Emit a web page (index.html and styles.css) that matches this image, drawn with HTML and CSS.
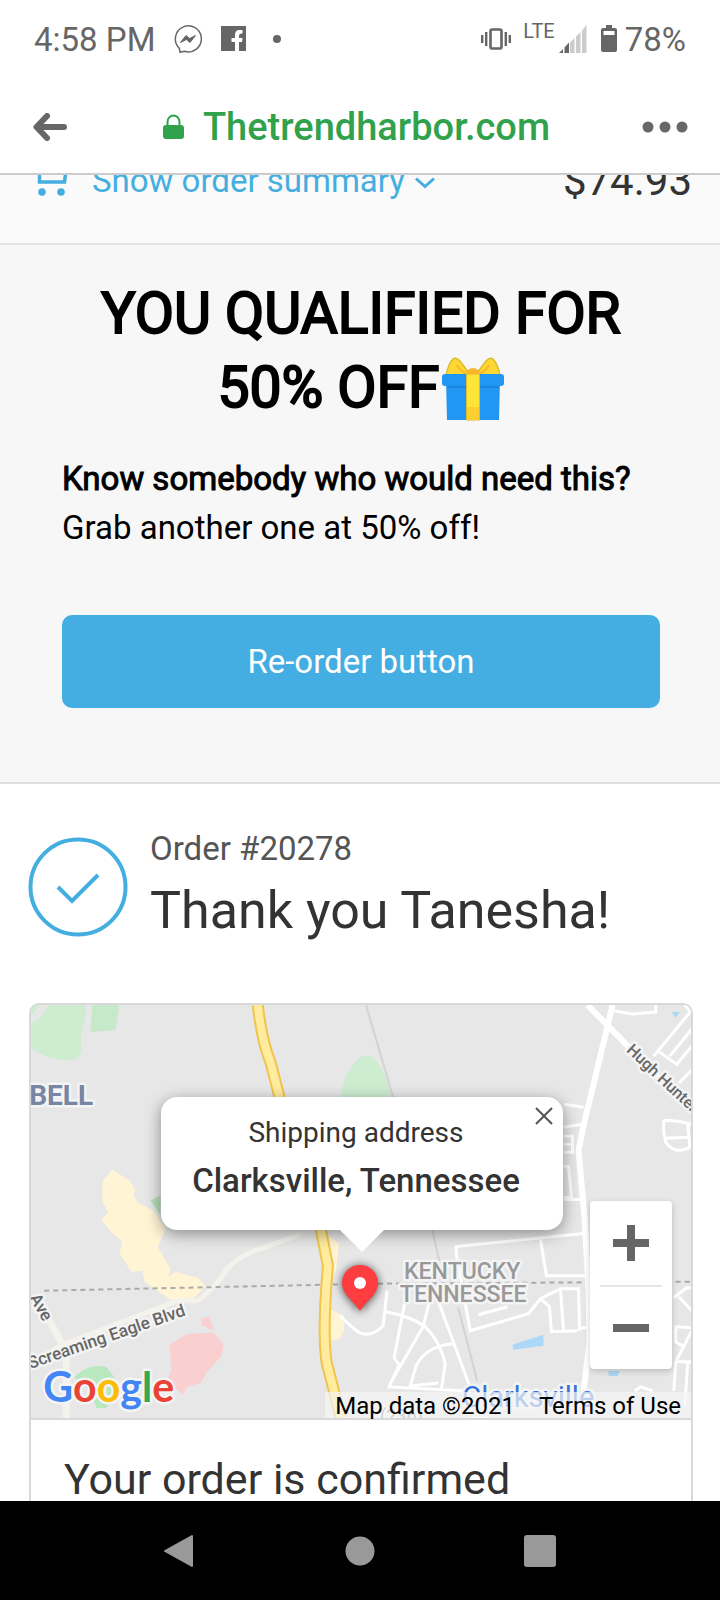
FILE: index.html
```html
<!DOCTYPE html>
<html lang="en">
<head>
<meta charset="utf-8">
<meta name="viewport" content="width=device-width, initial-scale=1">
<title>Thetrendharbor.com</title>
<link rel="stylesheet" href="styles.css">
</head>
<body>
<div class="status">
  <div class="status-group">
    <span>4:58 PM</span>
    <svg class="messenger" width="28" height="28" viewBox="0 0 28 28" fill="none" stroke="#666" stroke-width="1.5"><path d="M5.300 23.200A13 13 0 1 1 10.500 26.300L6 27.200Z" stroke-linejoin="round"/><path d="M6.500 17.500L12 10.500L15.500 13.500L21.500 10.500L16 17.500L12.500 14.500Z" fill="#666" stroke-width="1"/></svg>
    <svg class="facebook" width="26" height="26" viewBox="0 0 26 26"><path fill="#666" d="M0 0H25V25H18V16H21L21.500 12H18V10Q18 7.500 20.500 7.500H21.500V4H18.500Q14 4 14 9V12H10.500V16H14V25H0Z"/></svg>
    <svg class="dot" width="8" height="8" viewBox="0 0 8 8"><circle cx="4" cy="4" r="4" fill="#666"/></svg>
  </div>
  <div class="status-group status-right">
    <svg width="30" height="22" viewBox="0 0 30 22" fill="none" stroke="#666" stroke-width="2"><rect x="9.500" y="1.500" width="11" height="19" rx="1.500" stroke-width="2.600"/><path d="M1.200 7V15M5.200 4V18M24.800 4V18M28.800 7V15" stroke-width="2.400"/></svg>
    <span class="lte">LTE</span>
    <svg class="signal" width="28" height="28" viewBox="0 0 28 28"><path fill="#ccc" d="M11 17.500L15.500 13V28H11ZM17 11.500L21.500 7V28H17ZM23 5.500L27.500 0V28H23Z"/><path fill="#666" d="M0 28L4 24V28ZM5.500 22.500L10 17.500V28H5.500Z"/></svg>
    <svg class="battery" width="16" height="28" viewBox="0 0 16 28"><path fill="#666" fill-rule="evenodd" d="M5 0H11V3H14Q16 3 16 5V25Q16 27 14 27H2Q0 27 0 25V5Q0 3 2 3H5ZM2.500 6V10H13.500V6Z"/></svg>
    <span>78%</span>
  </div>
</div>
<header class="browser">
  <button class="icon-button" aria-label="Back"><svg width="34" height="28" viewBox="0 0 34 28" fill="none" stroke="#666769" stroke-width="6" stroke-linecap="round" stroke-linejoin="round"><path d="M31 14H4M14 3L3.500 14L14 25"/></svg></button>
  <div class="site">
    <svg width="22" height="26" viewBox="0 0 22 26"><rect x="0" y="11" width="21" height="14" rx="3" fill="#31a24c"/><path d="M4.500 13V8A6 6.500 0 0 1 16.500 8V13" fill="none" stroke="#31a24c" stroke-width="2"/></svg>
    <span>Thetrendharbor.com</span>
  </div>
  <button class="icon-button" aria-label="More options"><svg width="46" height="12" viewBox="0 0 46 12" fill="#666769"><circle cx="6" cy="6" r="5.500"/><circle cx="23" cy="6" r="5.500"/><circle cx="40" cy="6" r="5.500"/></svg></button>
</header>
<main class="page">
  <button class="summary">
    <svg class="cart" width="38" height="32" viewBox="0 0 38 32" fill="none" stroke="#44aee0" stroke-width="3.500"><path d="M0 2H9.500V18H34.500L36 6H9.500"/><g fill="#44aee0" stroke="none"><circle cx="12" cy="28" r="3.800"/><circle cx="31" cy="28" r="3.800"/></g></svg>
    <span>Show order summary</span>
    <svg class="chevron" width="20" height="12" viewBox="0 0 20 12" fill="none" stroke="#44aee0" stroke-width="3"><path d="M1 1.500L10 9.500L19 1.500"/></svg>
    <span class="total">$74.93</span>
  </button>
  <section class="offer">
    <h1>YOU QUALIFIED FOR<br>50% OFF<svg class="gift" width="64" height="64" viewBox="0 0 64 64" role="img" aria-label="Gift"><g fill="#fdd835" stroke="#d9bd25" stroke-width="1.500"><path d="M5 19Q7 7 12 2Q15 0 19 4L28 16L24 19Z"/><path d="M59 19Q57 7 52 2Q49 0 45 4L36 16L40 19Z"/></g><path d="M16 8Q18 13 26 17M48 8Q46 13 38 17" stroke="#fbb52c" stroke-width="2" fill="none"/><path fill="#2196f3" d="M5 22H59L58 63H6Z"/><path d="M6 30H58" stroke="#1b86dc" stroke-width="2"/><rect x="1" y="17" width="62" height="12" rx="3" fill="#2196f3"/><path fill="#ffe535" stroke="#d8bc2b" d="M25.500 17H38.500V63H25.500Z"/><path fill="#fdd030" d="M26 50H38V63H26Z"/><path fill="#fbb52c" d="M26 17Q26 11 32 11Q38 11 38 17Z"/></svg></h1>
    <p><strong>Know somebody who would need this?</strong><br>Grab another one at 50% off!</p>
    <button class="reorder">Re-order button</button>
  </section>
  <section class="thanks">
    <svg width="100" height="100" viewBox="0 0 100 100" fill="none" stroke="#44aee0" stroke-width="4"><circle cx="50" cy="50" r="47.500"/><path d="M30 50L44 64L70 38"/></svg>
    <div>
      <p class="order-number">Order #20278</p>
      <h2>Thank you Tanesha!</h2>
    </div>
  </section>
  <section class="card">
    <div class="map">
      <svg class="map-art" viewBox="31 1005 660 412" preserveAspectRatio="xMidYMid slice" role="img" aria-label="Map of Clarksville, Tennessee">
        <rect x="31" y="1005" width="660" height="412" fill="#e7e7e7"/>
        <g fill="#cdecd0">
          <path d="M49 1005H87L86 1018L82 1032V1050Q80 1060 72 1060Q46 1060 31 1047V1024Q44 1018 49 1005Z"/>
          <path d="M31 1005H41L31 1017Z"/>
          <path fill="#c6e9c9" d="M93 1005H120L116 1030L91 1032Z"/>
          <path d="M341 1098Q342 1078 353 1065Q361 1052 373 1057Q388 1074 391 1098Z"/>
          <path fill="#b9e8be" d="M75 1376Q90 1362 107 1366L120 1383L107 1407H97L92 1391Z"/>
          <path fill="#b5dfbc" d="M151 1200L161 1195V1215Z"/>
        </g>
        <g fill="#fff4d4">
          <path d="M103 1181L113 1169L130 1180L136 1189L134 1194L138 1202L154 1210L166 1228L161 1241L158 1246L171 1268L169 1276L176 1271L198 1277L206 1285L195 1297L171 1299L145 1281L143 1270L132 1271L120 1253L123 1241L112 1232L102 1219L109 1212L103 1201Z"/>
          <path d="M325 1233L339 1243L336 1270L329 1285ZM327 1307L344 1315V1330L339 1339H329Z"/>
        </g>
        <path fill="#facfcf" d="M201 1318L209 1316L215 1330L203 1325ZM170 1344L188 1333L214 1332L224 1344L222 1355L208 1370L201 1382L187 1386L183 1394L168 1378L172 1369Z"/>
        <g fill="#acd8f7"><path d="M671 1012H679L675 1018ZM512 1344L543 1334V1345L513 1349ZM608 1370H619L617 1375H608Z"/></g>
        <g fill="none" stroke="#f3f2ed" stroke-width="7">
          <path d="M43 1307L67 1350V1417M31 1365L68 1342"/>
          <path d="M68 1342L178 1300H198Q216 1287 226 1270Q240 1254 261 1248L300 1234" stroke-width="5"/>
        </g>
        <g fill="none" stroke="#d3d3d3" stroke-width="2"><path d="M366 1005L393 1097M432 1229L439 1260M458 1307L477 1380"/></g>
        <path d="M45 1290L375 1283L691 1281" fill="none" stroke="#aaa" stroke-width="2" stroke-dasharray="5 4"/>
        <g fill="none" stroke="#f1c44e" stroke-width="12"><path d="M258 1005Q262 1041 271 1063L280 1098"/><path d="M321 1229L328 1265Q322 1335 327 1363L341 1417"/></g>
        <g fill="none" stroke="#ffec9f" stroke-width="8"><path d="M258 1005Q262 1041 271 1063L280 1098"/><path d="M321 1229L328 1265Q322 1335 327 1363L341 1417"/></g>
        <g fill="none" stroke="#fff">
          <path stroke-width="6" d="M587 1005L691 1111M612 1005L600 1055L583 1125L578 1150L584 1217L588 1290L589 1340L583 1390"/>
          <path stroke-width="3" d="M614 1011L632 1014L655 1012V1005M691 1010L653 1056M691 1029L669 1056M656 1050L676 1064L691 1046M678 1083L691 1070M684 1005L691 1013"/>
          <path stroke-width="3" d="M663 1120L678 1121L691 1124M663 1120Q662 1131 665 1142Q675 1155 689 1147L687 1124M664 1138L687 1137M564 1104L583 1107M563 1127L582 1124M563 1136H572V1152H563M563 1144H572M563 1166H568L571 1197H563M563 1199H580"/>
          <path stroke-width="3" d="M583 1233L456 1246V1253L470 1330L528 1313L540 1298L560 1288H578L579 1330M540 1239L546 1275H588M560 1288L563 1330M540 1298L549 1306L551 1331L577 1330M507 1306L478 1314M579 1327H588"/>
          <path stroke-width="3" d="M340 1315Q350 1325 358 1331Q370 1338 383 1325L387 1290M386 1311Q412 1316 425 1326Q440 1340 445 1363L441 1390M405 1300L394 1357L399 1364L389 1386L467 1390M438 1300L470 1387M429 1302L423 1326L390 1383M453 1343Q426 1345 416 1365L410 1385L438 1382"/>
          <path stroke-width="3" d="M673 1297L686 1287H691M678 1296L691 1310M691 1327L675 1326V1341L682 1345M691 1330L675 1361L673 1390M691 1361H675M687 1361L684 1405M634 1390L640 1386L652 1390"/>
        </g>
        <g class="map-label">
          <text x="30" y="1105" font-size="28" font-weight="700" fill="#7886a3">BELL</text>
          <text x="462" y="1278" font-size="23" font-weight="500" fill="#999" text-anchor="middle">KENTUCKY</text>
          <text x="463" y="1301" font-size="23" font-weight="500" fill="#999" text-anchor="middle">TENNESSEE</text>
          <text transform="translate(31 1368) rotate(-19)" font-size="17" font-weight="500" fill="#666">Screaming Eagle Blvd</text>
          <text transform="translate(30 1297) rotate(60)" font-size="17" font-weight="500" fill="#666">Ave</text>
          <text transform="translate(625 1051) rotate(43)" font-size="16" font-weight="500" fill="#666">Hugh Hunter</text>
          <text x="462" y="1406" font-size="29" fill="#3472dc">Clarksville</text>
          <text x="472" y="1434" font-size="24" fill="#3472dc">Tennessee</text>
          <text x="380" y="1421" font-size="18" fill="#777">(236)</text>
          <text class="google" x="44" y="1401" font-size="41" font-weight="700"><tspan fill="#4285f4">G</tspan><tspan fill="#ea4335">o</tspan><tspan fill="#fbbc05">o</tspan><tspan fill="#4285f4">g</tspan><tspan fill="#34a853">l</tspan><tspan fill="#ea4335">e</tspan></text>
        </g>
      </svg>
      <svg class="pin" width="38" height="48" viewBox="0 0 38 48"><path d="M19 47Q14 40 9 35Q1 27 1 19A18 18 0 0 1 37 19Q37 27 29 35Q24 40 19 47Z" fill="#fd3d40"/><circle cx="19" cy="19" r="6" fill="#fff"/></svg>
      <div class="bubble">
        <p>Shipping address</p>
        <p class="place">Clarksville, Tennessee</p>
        <button class="close" aria-label="Close"><svg width="18" height="18" viewBox="0 0 18 18" stroke="#555" stroke-width="2"><path d="M1 1L17 17M17 1L1 17"/></svg></button>
      </div>
      <div class="zoom">
        <button aria-label="Zoom in"><svg width="36" height="36" viewBox="0 0 36 36"><path fill="#666" d="M14 0H22V14H36V22H22V36H14V22H0V14H14Z"/></svg></button>
        <button aria-label="Zoom out"><svg width="36" height="36" viewBox="0 0 36 36"><path fill="#666" d="M0 14H36V22H0Z"/></svg></button>
      </div>
      <div class="attribution"><span>Map data ©2021</span><a href="#terms">Terms of Use</a></div>
    </div>
    <h3>Your order is confirmed</h3>
  </section>
</main>
<nav class="system-nav">
  <button aria-label="Back"><svg width="34" height="34" viewBox="0 0 34 34"><path d="M29 2V32L2 17Z" fill="#999" stroke="#999" stroke-width="2" stroke-linejoin="round"/></svg></button>
  <button aria-label="Home"><svg width="34" height="34" viewBox="0 0 34 34"><circle cx="17" cy="17" r="14.500" fill="#999"/></svg></button>
  <button aria-label="Recent apps"><svg width="34" height="34" viewBox="0 0 34 34"><rect x="1" y="1" width="32" height="32" rx="3" fill="#999"/></svg></button>
</nav>
</body>
</html>
```
FILE: styles.css
```css
* { box-sizing: border-box; }
body {
  margin: 0;
  height: 100vh;
  display: flex;
  flex-direction: column;
  background: #fff;
  color: #333;
  font-family: Roboto, "Liberation Sans", sans-serif;
  font-size: 33px;
}
h1, h2, h3, p { margin: 0; font-weight: 400; }
button { margin: 0; padding: 0; border: 0; background: none; color: inherit; font: inherit; }
svg { display: block; flex: none; }

.status {
  flex: none;
  display: flex;
  justify-content: space-between;
  align-items: center;
  height: 78px;
  padding: 0 34px;
  color: #666;
}
.status-group { display: flex; align-items: center; }
.messenger { margin-left: 19px; }
.facebook { margin-left: 19px; }
.dot { margin-left: 26px; }
.lte { margin: 0 4px 16px 10px; font-size: 20px; }
.status-right svg:first-child { margin-right: 2px; }
.battery { margin: 0 8px 0 14px; }

.browser {
  flex: none;
  display: flex;
  justify-content: space-between;
  align-items: center;
  height: 97px;
  padding: 2px 32px 0 33px;
  border-bottom: 2px solid #ccc;
}
.icon-button { display: flex; }
.site {
  display: flex;
  align-items: center;
  gap: 18px;
  padding-left: 4px;
  color: #31a24c;
  font-size: 38px;
  font-weight: 500;
}

.page { flex: 1; min-height: 0; overflow: hidden; }
/* The page is scrolled so that only the lower half of this bar shows. */
.summary {
  display: flex;
  align-items: center;
  width: 100%;
  height: 128px;
  margin-top: -58px;
  padding: 0 28px 0 30px;
  background: #fafafa;
  border-bottom: 2px solid #e2e2e2;
  color: #44aee0;
}
.cart { margin-right: 24px; }
.chevron { margin: 6px 0 0 10px; }
.total { margin-left: auto; color: #333; font-size: 42px; }

.offer {
  padding: 32px 60px 74px 62px;
  background: #f7f7f7;
  border-bottom: 2px solid #ddd;
  color: #000;
}
h1 {
  font-size: 57px;
  line-height: 74px;
  text-align: center;
  -webkit-text-stroke: 2px #000;
}
.gift { display: inline-block; margin-left: 1px; vertical-align: -14px; }
.offer p { margin-top: 29px; line-height: 49px; }
strong { font-weight: 400; -webkit-text-stroke: 1px #000; }
.reorder {
  display: block;
  width: 100%;
  height: 93px;
  margin-top: 63px;
  border-radius: 10px;
  background: #44aee2;
  color: #fff;
}

.thanks {
  display: flex;
  align-items: center;
  gap: 22px;
  padding: 41px 28px 54px;
}
.order-number { color: #555; line-height: 48px; }
h2 { font-size: 52px; line-height: 76px; }

.card {
  margin: 0 27px 0 29px;
  border: 2px solid #d9d9d9;
  border-radius: 10px;
  overflow: hidden;
}
.map { position: relative; height: 415px; border-bottom: 2px solid #d9d9d9; }
.map-art { width: 100%; height: 100%; }
.map-label text { font-family: Roboto, sans-serif; paint-order: stroke; stroke: #f4f4f4; stroke-width: 5px; stroke-linejoin: round; }
.map-label .google { font-family: Lato, sans-serif; }
.pin { position: absolute; left: 50%; top: 259px; margin-left: -20px; filter: drop-shadow(0 1px 5px #444); }
.bubble {
  position: absolute;
  left: 50%;
  top: 92px;
  width: 402px;
  height: 133px;
  margin-left: -200px;
  padding: 16px 20px;
  border-radius: 16px;
  background: #fff;
  box-shadow: 0 4px 16px #0006;
  font-size: 28px;
  line-height: 40px;
  text-align: center;
}
.bubble p { padding-right: 12px; }
.bubble::after {
  content: "";
  position: absolute;
  left: 50%;
  top: 100%;
  margin-left: -22px;
  border: 22px solid transparent;
  border-top-color: #fff;
  border-bottom: 0;
}
.bubble .place { font-size: 33px; font-weight: 500; line-height: 56px; white-space: nowrap; }
.close { position: absolute; right: 10px; top: 10px; }
.zoom {
  position: absolute;
  right: 19px;
  top: 196px;
  width: 82px;
  padding: 0 10px;
  border-radius: 4px;
  background: #fff;
  box-shadow: 0 2px 6px #0003;
}
.zoom button { display: flex; align-items: center; justify-content: center; width: 100%; height: 84px; }
.zoom button + button { border-top: 2px solid #e6e6e6; }
.attribution {
  position: absolute;
  right: 0;
  bottom: 0;
  display: flex;
  gap: 24px;
  padding: 2px 10px 0;
  background: #f5f5f5b3;
  color: #000;
  font-size: 24px;
  line-height: 24px;
}
.attribution a { color: inherit; text-decoration: none; }
h3 { padding: 32px 33px; font-size: 43px; line-height: 54px; }

.system-nav {
  flex: none;
  display: flex;
  justify-content: center;
  align-items: center;
  gap: 146px;
  height: 99px;
  background: #000;
}
```
